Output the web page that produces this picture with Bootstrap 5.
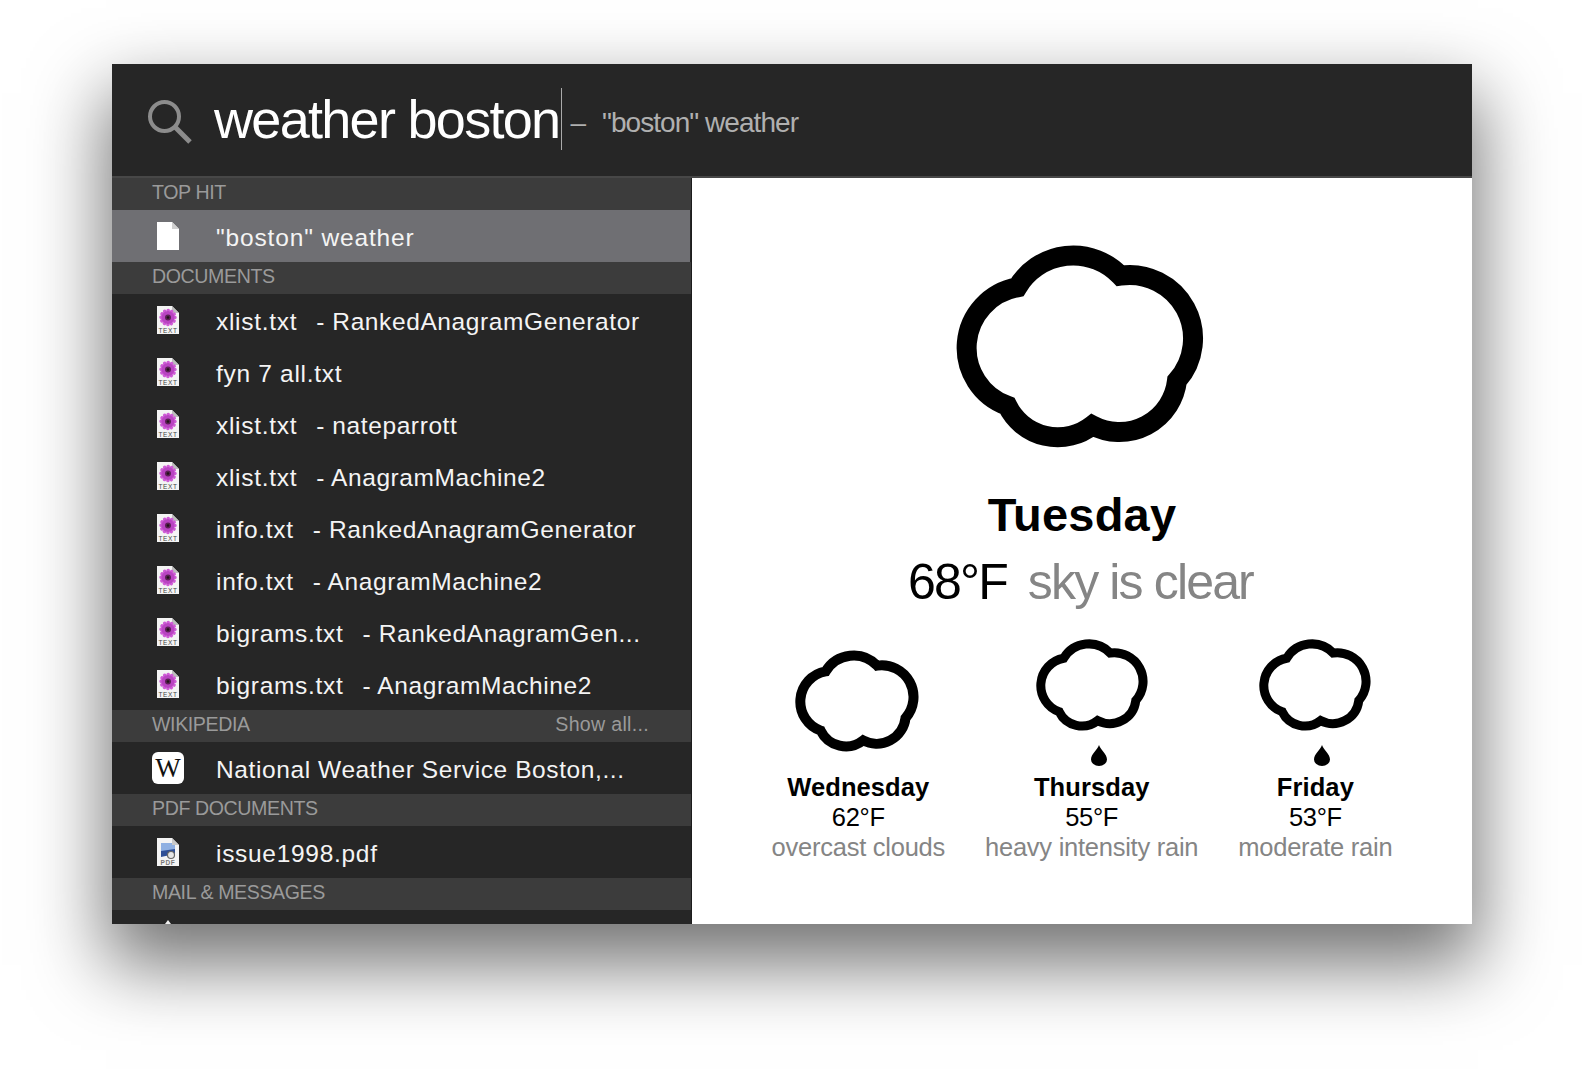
<!DOCTYPE html>
<html lang="en">
<head>
    <meta charset="UTF-8">
    <meta name="viewport" content="width=device-width, initial-scale=1.0">
    <title>Spotlight weather</title>
    <link href="https://cdn.jsdelivr.net/npm/bootstrap@5.3.0/dist/css/bootstrap.min.css" rel="stylesheet">
    <style>
        html, body { height: 100%; }
        body { background: #fff; font-family: "Liberation Sans", Arial, sans-serif; min-height: 1084px; padding-top: 64px; }
        .spot-window { width: 1360px; height: 860px; margin-left: 112px; background: #262626; box-shadow: 0 35px 70px 6px rgba(0,0,0,.55); overflow: hidden; }
        .spot-search { height: 114px; padding-left: 35px; border-bottom: 2px solid #474747; }
        .search-glass { width: 46px; height: 46px; margin-right: 21px; margin-top: 4px; }
        .search-text { font-size: 54px; letter-spacing: -1.7px; color: #fff; line-height: 62px; border-right: 1px solid #aaa; padding-right: 2px; margin-bottom: 3px; }
        .search-hint { font-size: 28px; letter-spacing: -.95px; color: #b0b0b0; margin-left: 8px; margin-top: 5px; }
        .hint-dash { margin-right: 10px; }
        .spot-side { width: 580px; border-right: 1px solid #1c1c1c; flex: none; }
        .side-head { height: 32px; background: #3c3c3c; color: #9a9a9a; font-size: 19.6px; letter-spacing: -.4px; padding: 0 42px 0 40px; line-height: 29px; }
        .show-all { letter-spacing: .3px; }
        .side-row { height: 52px; color: #f4f4f4; font-size: 24.5px; letter-spacing: .6px; padding-left: 44px; white-space: nowrap; }
        .side-row > span:not(.row-wiki) { padding-top: 4px; }
        .side-row.is-hit { background: #6f6f73; margin-right: 1px; letter-spacing: .85px; }
        .side-row .row-ico { width: 24px; height: 30px; flex: none; margin-right: 36px; }
        .side-row .row-wiki { width: 32px; height: 32px; background: #fff; border-radius: 6px; color: #111; font-family: "Liberation Serif", serif; font-size: 27px; line-height: 32px; letter-spacing: 0; text-align: center; margin-left: -4px; margin-right: 32px; flex: none; }
        .row-name { margin-right: 19px; letter-spacing: .7px; }
        .spot-preview { background: #fff; color: #000; padding-top: 67px; }
        .big-cloud { width: 248px; height: 203px; margin-right: 4px; }
        .day-title { font-size: 47px; font-weight: 700; line-height: 56px; letter-spacing: .2px; margin-top: 39px; }
        .now-line { font-size: 50px; line-height: 60px; letter-spacing: -1.85px; margin-top: 9px; margin-right: 3px; }
        .now-desc { color: #858585; margin-left: 21px; }
        .fore-row { gap: 40px; margin-top: 27px; }
        .fore-day { font-size: 25.5px; font-weight: 700; line-height: 30px; letter-spacing: .1px; }
        .fore-temp { font-size: 25.5px; line-height: 30px; letter-spacing: -.3px; }
        .fore-desc { font-size: 25.5px; line-height: 30px; letter-spacing: -.25px; color: #858585; white-space: nowrap; }
        .cloud-lg { width: 124px; height: 102px; margin-bottom: 20px; margin-right: 2px; }
        .cloud-md { width: 112px; height: 92px; }
        .rain-drop { width: 16px; height: 21px; margin: 14px 0 6px 14px; }
    </style>
</head>
<body>
    <svg width="0" height="0" class="position-absolute">
        <defs>
            <symbol id="cloud" viewBox="56 25 248 203">
                <path d="M117.3 67.3A65 65 0 0 1 220.3 55.7A63.500 63.500 0 0 1 277 160.7A58 58 0 0 1 192.3 205.3A56 56 0 0 1 107.3 185.700A61.500 61.500 0 0 1 117.3 67.3Z" fill="none" stroke="#000" stroke-width="20"/>
            </symbol>
            <symbol id="txtdoc" viewBox="0 0 24 30">
                <path d="M1 1H16L23 8V29H1Z" fill="#f4f4f4"/>
                <path d="M16 1V8H23Z" fill="#bdbdbd"/>
                <circle cx="12" cy="12.500" r="7" fill="none" stroke="#cf5bd6" stroke-width="3.500" stroke-linecap="round" stroke-dasharray=".1 3.560"/>
                <circle cx="12" cy="12.500" r="6.500" fill="#b944c2"/>
                <circle cx="12" cy="12.500" r="3" fill="#5b1f55"/>
                <circle cx="12" cy="12.500" r="1.300" fill="#1f1416"/>
                <text x="12" y="28" text-anchor="middle" font-size="6.5" fill="#444" font-family="Liberation Sans">TEXT</text>
            </symbol>
            <symbol id="pdfdoc" viewBox="0 0 24 30">
                <path d="M1 1H16L23 8V29H1Z" fill="#f4f4f4"/>
                <path d="M5 6H17V8H19V15L5 19Z" fill="#8fb0e2"/>
                <path d="M16 1V8H23Z" fill="#c8c8c8"/>
                <path d="M5 14L19 12V17L5 20Z" fill="#2f4f96"/>
                <circle cx="15" cy="18" r="3.5" fill="#e6e6e6" stroke="#666" stroke-width="1.2"/>
                <text x="12" y="28" text-anchor="middle" font-size="6.5" font-weight="700" fill="#777" font-family="Liberation Sans">PDF</text>
            </symbol>
        </defs>
    </svg>

    <div class="spot-window d-flex flex-column">
        <div class="spot-search d-flex align-items-center flex-shrink-0">
            <svg class="search-glass" viewBox="0 0 46 46"><circle cx="17.5" cy="17.5" r="14.5" fill="none" stroke="#8c8c8c" stroke-width="4"/><path d="M28 28L43 43" stroke="#8c8c8c" stroke-width="5" fill="none"/></svg>
            <span class="search-text">weather boston</span>
            <span class="search-hint"><span class="hint-dash">–</span> "boston" weather</span>
        </div>
        <div class="d-flex flex-grow-1 overflow-hidden">
            <div class="spot-side">
                <div class="side-head">TOP HIT</div>
                <div class="side-row is-hit d-flex align-items-center">
                    <svg class="row-ico" viewBox="0 0 24 30"><path d="M1 1H16L23 8V29H1Z" fill="#fff"/><path d="M16 1V8H23Z" fill="#cfcfcf"/></svg>
                    <span>"boston" weather</span>
                </div>
                <div class="side-head">DOCUMENTS</div>
                <div class="side-row d-flex align-items-center"><svg class="row-ico"><use href="#txtdoc"/></svg><span class="row-name">xlist.txt</span><span>- RankedAnagramGenerator</span></div>
                <div class="side-row d-flex align-items-center"><svg class="row-ico"><use href="#txtdoc"/></svg><span class="row-name">fyn 7 all.txt</span></div>
                <div class="side-row d-flex align-items-center"><svg class="row-ico"><use href="#txtdoc"/></svg><span class="row-name">xlist.txt</span><span>- nateparrott</span></div>
                <div class="side-row d-flex align-items-center"><svg class="row-ico"><use href="#txtdoc"/></svg><span class="row-name">xlist.txt</span><span>- AnagramMachine2</span></div>
                <div class="side-row d-flex align-items-center"><svg class="row-ico"><use href="#txtdoc"/></svg><span class="row-name">info.txt</span><span>- RankedAnagramGenerator</span></div>
                <div class="side-row d-flex align-items-center"><svg class="row-ico"><use href="#txtdoc"/></svg><span class="row-name">info.txt</span><span>- AnagramMachine2</span></div>
                <div class="side-row d-flex align-items-center"><svg class="row-ico"><use href="#txtdoc"/></svg><span class="row-name">bigrams.txt</span><span>- RankedAnagramGen...</span></div>
                <div class="side-row d-flex align-items-center"><svg class="row-ico"><use href="#txtdoc"/></svg><span class="row-name">bigrams.txt</span><span>- AnagramMachine2</span></div>
                <div class="side-head d-flex justify-content-between"><span>WIKIPEDIA</span><span class="show-all">Show all...</span></div>
                <div class="side-row d-flex align-items-center"><span class="row-wiki">W</span><span>National Weather Service Boston,...</span></div>
                <div class="side-head">PDF DOCUMENTS</div>
                <div class="side-row d-flex align-items-center"><svg class="row-ico"><use href="#pdfdoc"/></svg><span class="row-name">issue1998.pdf</span></div>
                <div class="side-head">MAIL &amp; MESSAGES</div>
                <div class="side-row d-flex align-items-start pt-2"><svg class="row-ico" viewBox="0 0 24 30"><path d="M12 2L15 6H9Z" fill="#eee"/></svg></div>
            </div>
            <div class="spot-preview flex-grow-1 d-flex flex-column align-items-center">
                <svg class="big-cloud"><use href="#cloud"/></svg>
                <div class="day-title">Tuesday</div>
                <div class="now-line d-flex"><span>68°F</span><span class="now-desc">sky is clear</span></div>
                <div class="fore-row d-flex align-items-end">
                    <div class="d-flex flex-column align-items-center">
                        <svg class="cloud-lg"><use href="#cloud"/></svg>
                        <div class="fore-day">Wednesday</div>
                        <div class="fore-temp">62°F</div>
                        <div class="fore-desc">overcast clouds</div>
                    </div>
                    <div class="d-flex flex-column align-items-center">
                        <svg class="cloud-md"><use href="#cloud"/></svg>
                        <svg class="rain-drop" viewBox="0 0 16 21"><path d="M8 0C9.500 5 16 9 16 14.500A8 6.500 0 0 1 0 14.500C0 9 6.500 5 8 0Z" fill="#000"/></svg>
                        <div class="fore-day">Thursday</div>
                        <div class="fore-temp">55°F</div>
                        <div class="fore-desc">heavy intensity rain</div>
                    </div>
                    <div class="d-flex flex-column align-items-center">
                        <svg class="cloud-md"><use href="#cloud"/></svg>
                        <svg class="rain-drop" viewBox="0 0 16 21"><path d="M8 0C9.500 5 16 9 16 14.500A8 6.500 0 0 1 0 14.500C0 9 6.500 5 8 0Z" fill="#000"/></svg>
                        <div class="fore-day">Friday</div>
                        <div class="fore-temp">53°F</div>
                        <div class="fore-desc">moderate rain</div>
                    </div>
                </div>
            </div>
        </div>
    </div>
</body>
</html>
